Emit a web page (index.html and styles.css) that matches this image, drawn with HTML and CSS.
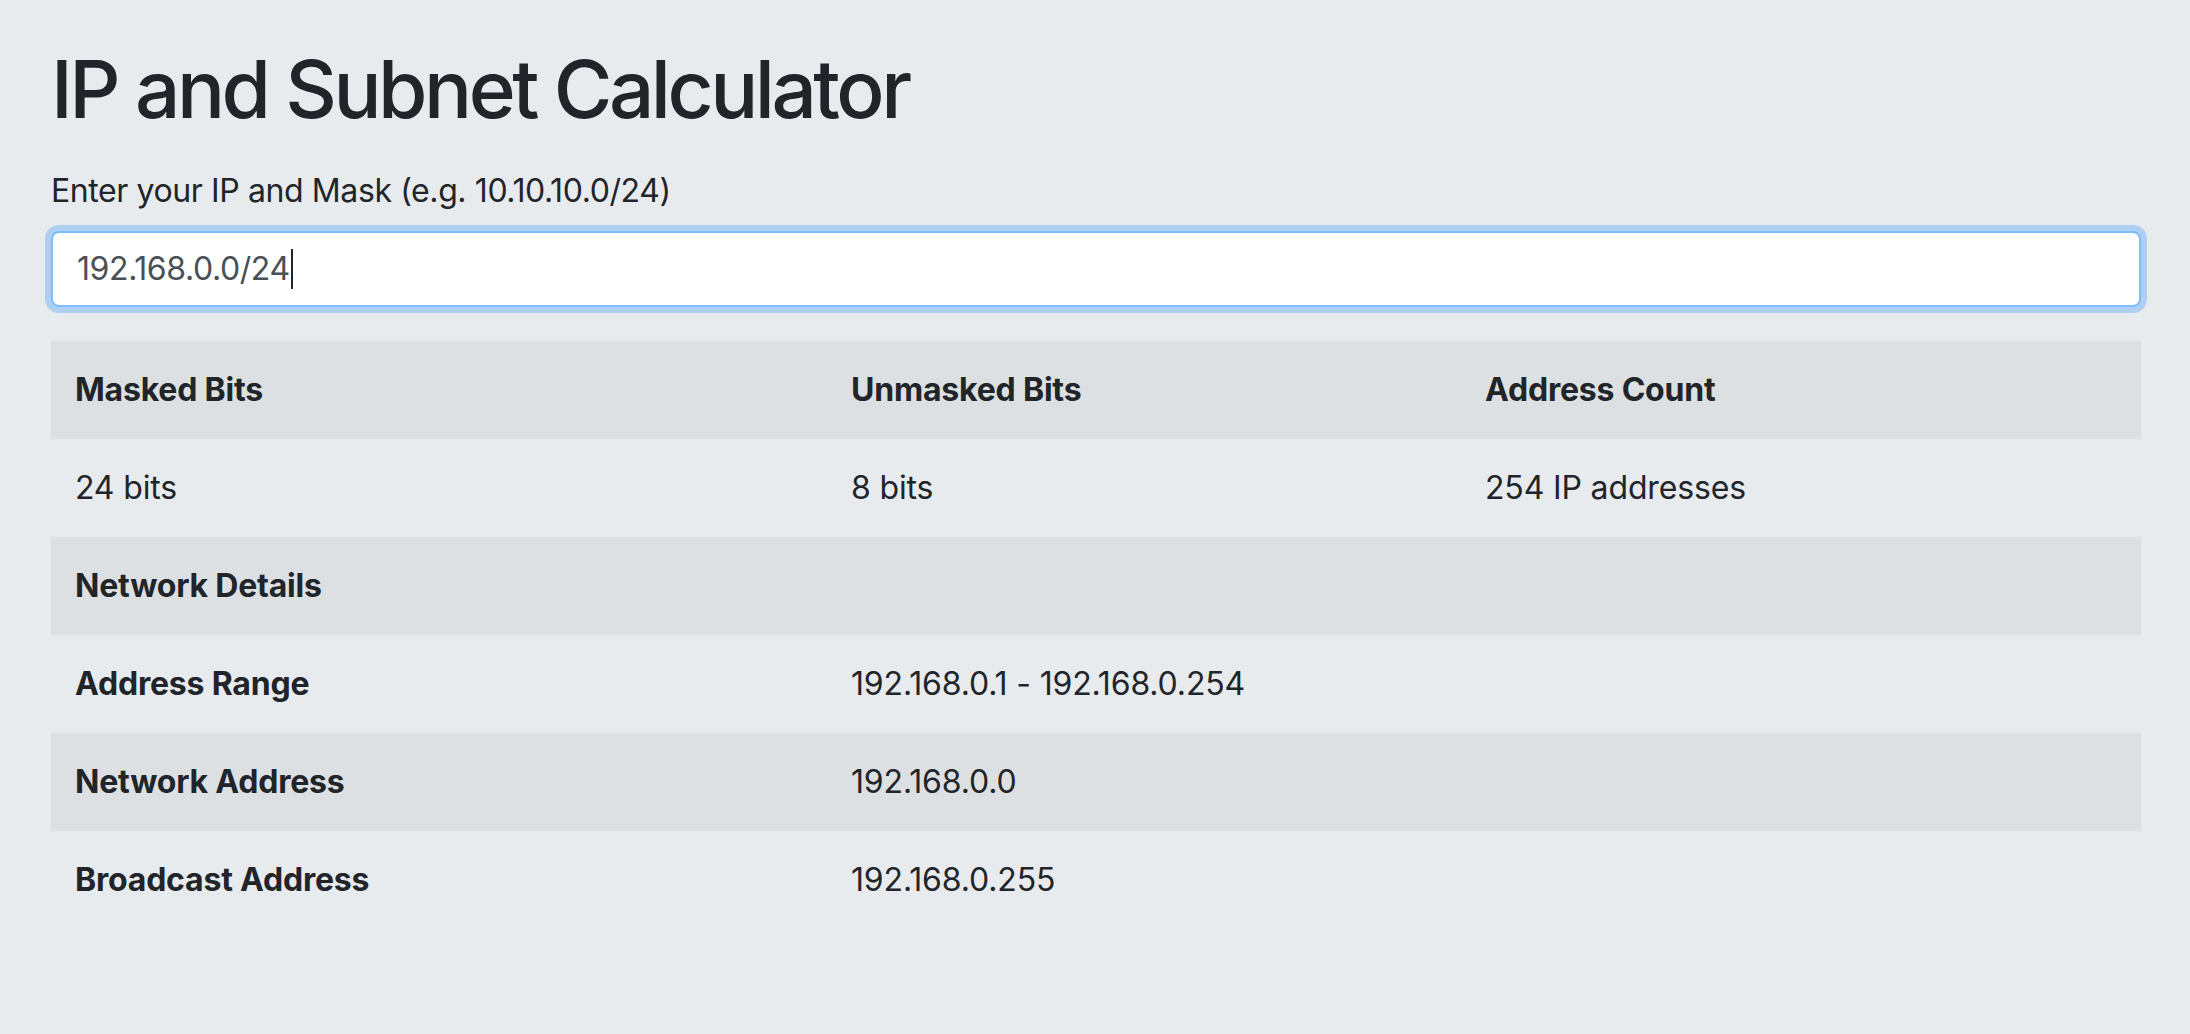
FILE: index.html
```html
<!DOCTYPE html>
<html lang="en">
<head>
<meta charset="utf-8">
<title>IP and Subnet Calculator</title>
<link rel="stylesheet" href="styles.css">
</head>
<body>
<main class="container">
  <h1 class="title">IP and Subnet Calculator</h1>
  <div class="form-group">
    <label class="label" for="ip">Enter your IP and Mask (e.g. 10.10.10.0/24)</label>
    <div class="form-control" id="ip" role="textbox"><span class="value">192.168.0.0/24</span><span class="caret"></span></div>
  </div>
  <table class="results">
    <colgroup>
      <col class="c1"><col class="c2"><col class="c3">
    </colgroup>
    <tr class="shade">
      <th>Masked Bits</th><th>Unmasked Bits</th><th>Address Count</th>
    </tr>
    <tr>
      <td>24 bits</td><td>8 bits</td><td>254 IP addresses</td>
    </tr>
    <tr class="shade">
      <th>Network Details</th><td></td><td></td>
    </tr>
    <tr>
      <th>Address Range</th><td>192.168.0.1 - 192.168.0.254</td><td></td>
    </tr>
    <tr class="shade">
      <th>Network Address</th><td>192.168.0.0</td><td></td>
    </tr>
    <tr>
      <th>Broadcast Address</th><td>192.168.0.255</td><td></td>
    </tr>
  </table>
</main>
</body>
</html>
```
FILE: styles.css
```css
html, body {
  margin: 0;
  padding: 0;
  background: #e8ebee;
}
body {
  font-family: Inter, "Noto Sans", "Liberation Sans", sans-serif;
  color: #212529;
  font-size: 32px;
  line-height: 1.5;
  letter-spacing: -0.4px;
}
.container {
  padding: 41px 49px 0 51px;
}
.title {
  margin: 0 0 30px;
  font-size: 80px;
  font-weight: 500;
  line-height: 1.2;
  letter-spacing: -3.5px;
}
.form-group {
  margin-bottom: 33px;
}
.label {
  display: block;
  margin-bottom: 16px;
}
.form-control {
  display: flex;
  align-items: center;
  height: 76px;
  box-sizing: border-box;
  padding: 0 24px;
  background: #fff;
  border: 2px solid #80bdff;
  border-radius: 8px;
  box-shadow: 0 0 0 6px rgba(0, 123, 255, 0.25);
  color: #495057;
}
.caret {
  display: inline-block;
  width: 2px;
  height: 40px;
  background: #212529;
  margin-left: 1px;
}
.results {
  width: 100%;
  border-collapse: collapse;
}
.c1 { width: 776px; }
.c2 { width: 634px; }
.results th,
.results td {
  padding: 24px;
  border-top: 2px solid transparent;
  text-align: left;
  vertical-align: top;
  height: 48px;
}
.results td {
  letter-spacing: -0.15px;
}
.results th {
  font-weight: 700;
  letter-spacing: -0.2px;
}
.shade {
  background: #dce0e3;
}
```
